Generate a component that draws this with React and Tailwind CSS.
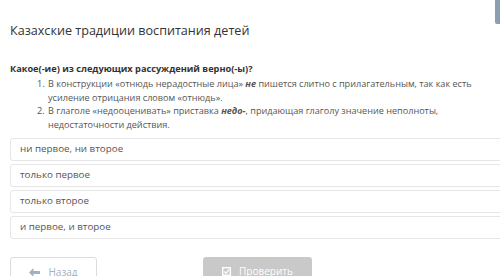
import { useState } from 'react'

const options = [
    'ни первое, ни второе',
    'только первое',
    'только второе',
    'и первое, и второе',
]

const App = () => {
    const [selected, setSelected] = useState(null)

    return (
        <div className="relative w-[500px] h-[276px] overflow-hidden bg-white font-['Open_Sans',sans-serif] text-[#555]">
            {/* Side tab */}
            <div className="absolute right-0 top-0 w-[5px] h-[24px] bg-[#8d9db2] rounded-bl-[2px]" />

            <div className="pl-[10px] pt-[22px]">
                <h1 className="text-[12.6px] leading-[18px] text-[#333]">
                    Казахские традиции воспитания детей
                </h1>

                <p className="mt-[22px] text-[9.2px] leading-[13px] font-bold text-[#333]">
                    Какое(-ие) из следующих рассуждений верно(-ы)?
                </p>

                <ol className="mt-[2px] pl-[37px] list-decimal text-[9.1px] leading-[13.5px] text-[#555] whitespace-nowrap">
                    <li className="pl-[1px]">
                        В конструкции «отнюдь нерадостные лица» <b><i>не</i></b> пишется слитно с прилагательным, так как есть
                        <br />
                        усиление отрицания словом «отнюдь».
                    </li>
                    <li className="pl-[1px]">
                        В глаголе «недооценивать» приставка <b><i>недо-</i></b>, придающая глаголу значение неполноты,
                        <br />
                        недостаточности действия.
                    </li>
                </ol>

                <div className="mt-[7px] w-[510px] flex flex-col gap-[3px]">
                    {options.map((opt, i) => (
                        <button
                            key={opt}
                            onClick={() => setSelected(i)}
                            className={`h-[23px] flex items-center px-[9px] text-left text-[9.8px] text-[#555] border rounded-[3px] ${selected === i ? 'border-[#8d9db2]' : 'border-[#e6e6e6]'}`}>
                            {opt}
                        </button>
                    ))}
                </div>

                <div className="mt-[18px] flex items-start">
                    <button className="w-[87px] h-[30px] border border-[#dcdcdc] rounded-[3px] flex items-start pt-[7px] justify-center gap-[8px] text-[10px] text-[#a3b0bf]">
                        <svg className="mt-[3px]" width="11" height="9" viewBox="0 0 11 9" fill="#a3b0bf">
                            <path d="M0 4.5 L4.5 0 V3 H11 V6 H4.5 V9 Z" />
                        </svg>
                        Назад
                    </button>
                    <button className="ml-[106px] w-[109px] h-[30px] bg-[#c9c9c9] rounded-[3px] flex items-start pt-[7px] justify-center gap-[8px] text-[10px] text-white">
                        <svg className="mt-[3px]" width="9" height="9" viewBox="0 0 9 9" fill="none" stroke="white" strokeWidth="1.4">
                            <rect x="0.7" y="0.7" width="7.6" height="7.6" />
                            <path d="M2.2 4.5 L4 6.2 L7 2.6" />
                        </svg>
                        Проверить
                    </button>
                </div>
            </div>
        </div>
    )
}

export default App
